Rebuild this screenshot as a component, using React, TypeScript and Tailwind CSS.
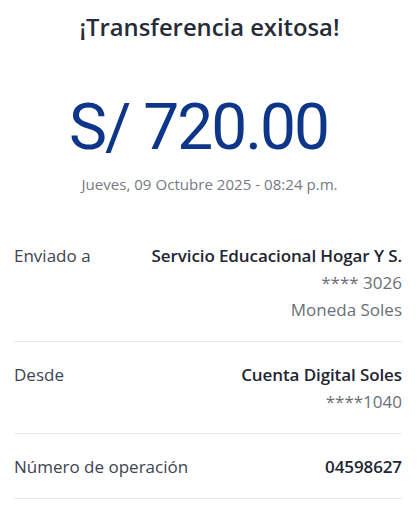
import React from "react";

const font = { fontFamily: "'Open Sans', Roboto, sans-serif" };

function Row({ label, lines }: { label: string; lines: { text: string; bold?: boolean }[] }) {
  return (
    <div className="flex justify-between border-b border-[#e6e8ec] pt-[19px] pb-[18px] text-[17px] leading-[27px]">
      <div className="text-[#3d4350]">{label}</div>
      <div className="flex flex-col items-end text-right">
        {lines.map((l, i) => (
          <div key={i} className={l.bold ? "font-semibold text-[#1f2533] tracking-[-0.1px]" : "text-[#6b6f78]"}>
            {l.text}
          </div>
        ))}
      </div>
    </div>
  );
}

export default function App() {
  return (
    <div className="w-[419px] h-[521px] bg-white overflow-hidden" style={font}>
      <div className="pt-[11px] text-center text-[23.8px] leading-[32px] font-semibold text-[#262c38]">
        ¡Transferencia exitosa!
      </div>
      <div
        className="mt-[53px] pr-[22px] text-center text-[64px] leading-[64px] text-[#0d3589] tracking-[-2px]"
        style={{ fontFamily: "Roboto, sans-serif" }}
      >
        S/ 720.00
      </div>
      <div className="mt-[14px] text-center text-[15.1px] leading-[20px] text-[#767a84]">
        Jueves, 09 Octubre 2025 - 08:24 p.m.
      </div>
      <div className="mt-[29px] px-[14px] mr-[3px]">
        <Row
          label="Enviado a"
          lines={[
            { text: "Servicio Educacional Hogar Y S.", bold: true },
            { text: "**** 3026" },
            { text: "Moneda Soles" },
          ]}
        />
        <Row
          label="Desde"
          lines={[{ text: "Cuenta Digital Soles", bold: true }, { text: "****1040" }]}
        />
        <Row label="Número de operación" lines={[{ text: "04598627", bold: true }]} />
      </div>
    </div>
  );
}
